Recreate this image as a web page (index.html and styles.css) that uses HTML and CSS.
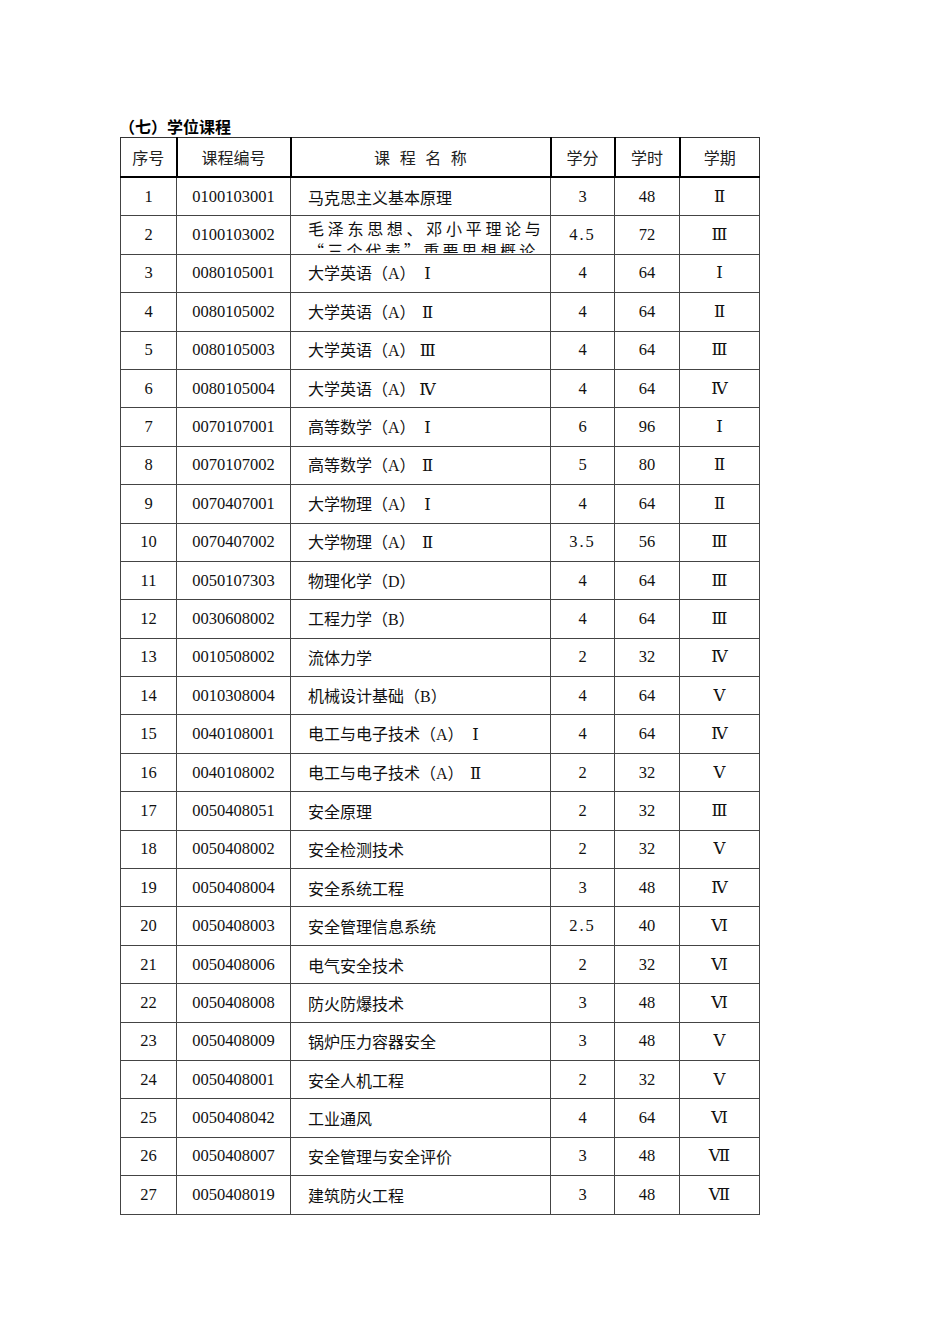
FILE: index.html
```
<!DOCTYPE html>
<html lang="zh-CN">
<head>
<meta charset="utf-8">
<title>学位课程</title>
<link rel="stylesheet" href="styles.css">
</head>
<body>
<div class="page">
  <h2 class="title">（七）学位课程</h2>
  <table class="courses">
    <colgroup>
      <col class="c-no"><col class="c-code"><col class="c-name"><col class="c-credit"><col class="c-hours"><col class="c-term">
    </colgroup>
    <thead>
      <tr><th>序号</th><th>课程编号</th><th class="spaced">课 程 名 称</th><th>学分</th><th>学时</th><th>学期</th></tr>
    </thead>
    <tbody>
      <tr><td class="num">1</td><td class="num">0100103001</td><td class="name">马克思主义基本原理</td><td class="num">3</td><td class="num">48</td><td class="num">Ⅱ</td></tr>
      <tr><td class="num">2</td><td class="num">0100103002</td><td class="name"><div class="clip">毛泽东思想、邓小平理论与“三个代表”重要思想概论</div></td><td class="num mono">4.5</td><td class="num">72</td><td class="num">Ⅲ</td></tr>
      <tr><td class="num">3</td><td class="num">0080105001</td><td class="name">大学英语（<span class="lat">A</span>）<span class="rn">Ⅰ</span></td><td class="num">4</td><td class="num">64</td><td class="num">Ⅰ</td></tr>
      <tr><td class="num">4</td><td class="num">0080105002</td><td class="name">大学英语（<span class="lat">A</span>）<span class="rn">Ⅱ</span></td><td class="num">4</td><td class="num">64</td><td class="num">Ⅱ</td></tr>
      <tr><td class="num">5</td><td class="num">0080105003</td><td class="name">大学英语（<span class="lat">A</span>）<span class="rn">Ⅲ</span></td><td class="num">4</td><td class="num">64</td><td class="num">Ⅲ</td></tr>
      <tr><td class="num">6</td><td class="num">0080105004</td><td class="name">大学英语（<span class="lat">A</span>）<span class="rn">Ⅳ</span></td><td class="num">4</td><td class="num">64</td><td class="num">Ⅳ</td></tr>
      <tr><td class="num">7</td><td class="num">0070107001</td><td class="name">高等数学（<span class="lat">A</span>）<span class="rn">Ⅰ</span></td><td class="num">6</td><td class="num">96</td><td class="num">Ⅰ</td></tr>
      <tr><td class="num">8</td><td class="num">0070107002</td><td class="name">高等数学（<span class="lat">A</span>）<span class="rn">Ⅱ</span></td><td class="num">5</td><td class="num">80</td><td class="num">Ⅱ</td></tr>
      <tr><td class="num">9</td><td class="num">0070407001</td><td class="name">大学物理（<span class="lat">A</span>）<span class="rn">Ⅰ</span></td><td class="num">4</td><td class="num">64</td><td class="num">Ⅱ</td></tr>
      <tr><td class="num">10</td><td class="num">0070407002</td><td class="name">大学物理（<span class="lat">A</span>）<span class="rn">Ⅱ</span></td><td class="num mono">3.5</td><td class="num">56</td><td class="num">Ⅲ</td></tr>
      <tr><td class="num">11</td><td class="num">0050107303</td><td class="name">物理化学（<span class="lat">D</span>）</td><td class="num">4</td><td class="num">64</td><td class="num">Ⅲ</td></tr>
      <tr><td class="num">12</td><td class="num">0030608002</td><td class="name">工程力学（<span class="lat">B</span>）</td><td class="num">4</td><td class="num">64</td><td class="num">Ⅲ</td></tr>
      <tr><td class="num">13</td><td class="num">0010508002</td><td class="name">流体力学</td><td class="num">2</td><td class="num">32</td><td class="num">Ⅳ</td></tr>
      <tr><td class="num">14</td><td class="num">0010308004</td><td class="name">机械设计基础（<span class="lat">B</span>）</td><td class="num">4</td><td class="num">64</td><td class="num">Ⅴ</td></tr>
      <tr><td class="num">15</td><td class="num">0040108001</td><td class="name">电工与电子技术（<span class="lat">A</span>）<span class="rn">Ⅰ</span></td><td class="num">4</td><td class="num">64</td><td class="num">Ⅳ</td></tr>
      <tr><td class="num">16</td><td class="num">0040108002</td><td class="name">电工与电子技术（<span class="lat">A</span>）<span class="rn">Ⅱ</span></td><td class="num">2</td><td class="num">32</td><td class="num">Ⅴ</td></tr>
      <tr><td class="num">17</td><td class="num">0050408051</td><td class="name">安全原理</td><td class="num">2</td><td class="num">32</td><td class="num">Ⅲ</td></tr>
      <tr><td class="num">18</td><td class="num">0050408002</td><td class="name">安全检测技术</td><td class="num">2</td><td class="num">32</td><td class="num">Ⅴ</td></tr>
      <tr><td class="num">19</td><td class="num">0050408004</td><td class="name">安全系统工程</td><td class="num">3</td><td class="num">48</td><td class="num">Ⅳ</td></tr>
      <tr><td class="num">20</td><td class="num">0050408003</td><td class="name">安全管理信息系统</td><td class="num mono">2.5</td><td class="num">40</td><td class="num">Ⅵ</td></tr>
      <tr><td class="num">21</td><td class="num">0050408006</td><td class="name">电气安全技术</td><td class="num">2</td><td class="num">32</td><td class="num">Ⅵ</td></tr>
      <tr><td class="num">22</td><td class="num">0050408008</td><td class="name">防火防爆技术</td><td class="num">3</td><td class="num">48</td><td class="num">Ⅵ</td></tr>
      <tr><td class="num">23</td><td class="num">0050408009</td><td class="name">锅炉压力容器安全</td><td class="num">3</td><td class="num">48</td><td class="num">Ⅴ</td></tr>
      <tr><td class="num">24</td><td class="num">0050408001</td><td class="name">安全人机工程</td><td class="num">2</td><td class="num">32</td><td class="num">Ⅴ</td></tr>
      <tr><td class="num">25</td><td class="num">0050408042</td><td class="name">工业通风</td><td class="num">4</td><td class="num">64</td><td class="num">Ⅵ</td></tr>
      <tr><td class="num">26</td><td class="num">0050408007</td><td class="name">安全管理与安全评价</td><td class="num">3</td><td class="num">48</td><td class="num">Ⅶ</td></tr>
      <tr><td class="num">27</td><td class="num">0050408019</td><td class="name">建筑防火工程</td><td class="num">3</td><td class="num">48</td><td class="num">Ⅶ</td></tr>
    </tbody>
  </table>
</div>
</body>
</html>
```
FILE: styles.css
```
html, body {
  margin: 0;
  padding: 0;
  background: #fff;
}
body {
  font-family: "Liberation Serif", "Noto Sans CJK SC", serif;
  color: #111;
}
.page {
  padding: 115px 0 0 120px;
}
.title {
  margin: 0 0 0 -1px;
  height: 22px;
  line-height: 22px;
  font-family: "Noto Sans CJK SC", sans-serif;
  font-size: 16px;
  font-weight: 700;
  color: #000;
}
.courses {
  border-collapse: collapse;
  table-layout: fixed;
  width: 639px;
  border: 1px solid #333;
}
.c-no { width: 56px; }
.c-code { width: 114px; }
.c-name { width: 260px; }
.c-credit { width: 64px; }
.c-hours { width: 65px; }
.c-term { width: 80px; }
.courses th {
  height: 38px;
  padding: 0;
  font-family: "Noto Sans CJK SC", sans-serif;
  font-weight: 400;
  font-size: 16px;
  color: #222;
  border-right: 2px solid #000;
  border-bottom: 2px solid #000;
  border-top: 1px solid #333;
  white-space: pre;
}
.courses th.spaced {
  word-spacing: 6px;
}
.courses th:last-child {
  border-right: 1px solid #333;
}
.courses td {
  height: 37.4px;
  padding: 0;
  border: 1px solid #444;
  font-size: 16.5px;
  line-height: 20px;
  vertical-align: middle;
}
.courses td.num {
  text-align: center;
  font-family: "Liberation Serif", "DejaVu Serif", "Noto Sans CJK SC", serif;
}
.courses td.mono {
  letter-spacing: 2px;
}
.courses td.name {
  padding-left: 17px;
  font-family: "Noto Sans CJK SC", sans-serif;
  font-size: 16px;
}
.lat {
  font-family: "Liberation Serif", serif;
  font-size: 16px;
}
.rn {
  display: inline-block;
  width: 24px;
  text-align: center;
  font-family: "Liberation Serif", "DejaVu Serif", serif;
  font-size: 16.5px;
}
.clip {
  height: 36px;
  overflow: hidden;
  padding-top: 0;
  box-sizing: border-box;
  padding-right: 6px;
  letter-spacing: 3.2px;
  text-align: justify;
  line-height: 22px;
}
```
